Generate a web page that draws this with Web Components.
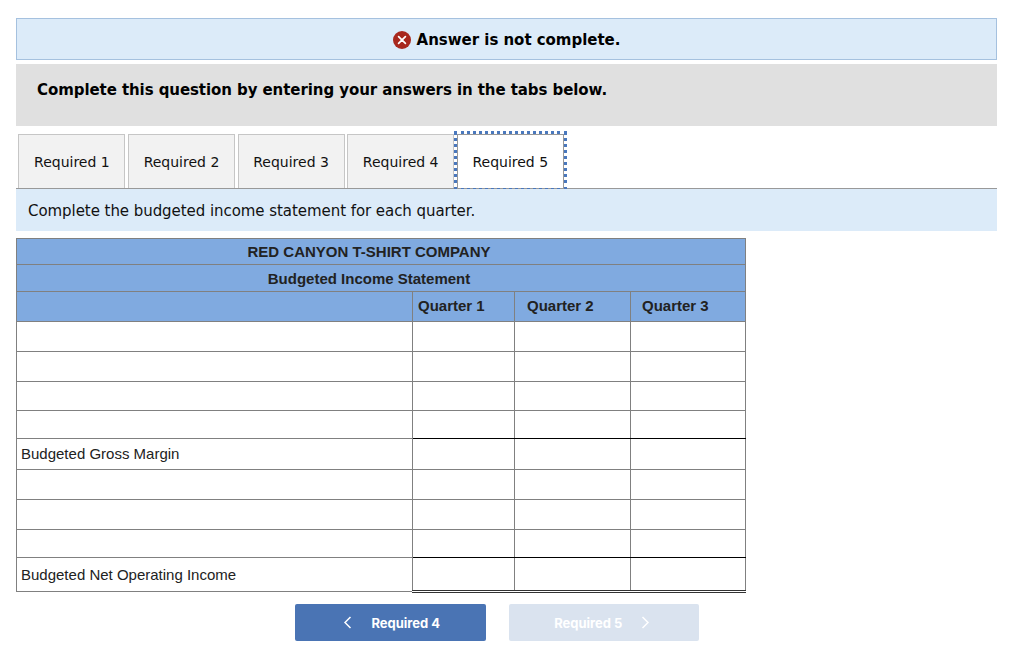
<!DOCTYPE html>
<html>
<head>
<meta charset="utf-8">
<title>Budgeted Income Statement</title>
<style>
    html, body { margin: 0; background: #fff; }
    body { padding: 18px 27px 0 16px; font-family: "DejaVu Sans", sans-serif; color: #000; }
</style>
</head>
<body>
<alert-banner>Answer is not complete.</alert-banner>
<question-prompt>Complete this question by entering your answers in the tabs below.</question-prompt>
<tab-strip>
    <tab-item>Required 1</tab-item>
    <tab-item>Required 2</tab-item>
    <tab-item>Required 3</tab-item>
    <tab-item>Required 4</tab-item>
    <tab-item active>Required 5</tab-item>
</tab-strip>
<instruction-bar>Complete the budgeted income statement for each quarter.</instruction-bar>
<statement-table></statement-table>
<nav-buttons>
    <nav-button dir="prev">Required 4</nav-button>
    <nav-button dir="next" disabled>Required 5</nav-button>
</nav-buttons>

<script>
class AlertBanner extends HTMLElement {
    connectedCallback() {
        this.attachShadow({ mode: 'open' });
        this.shadowRoot.innerHTML = `
            <style>
                :host {
                    display: flex;
                    align-items: center;
                    justify-content: center;
                    gap: 6px;
                    box-sizing: border-box;
                    height: 42px;
                    padding-top: 2px;
                    background: #dcebf9;
                    border: 1px solid #a5c1df;
                    font-size: 15px;
                    letter-spacing: -0.03px;
                    font-weight: bold;
                    color: #000;
                }
                svg { display: block; }
            </style>
            <svg width="18" height="18" viewBox="0 0 18 18">
                <circle cx="9" cy="9" r="9" fill="#a8281e"/>
                <path d="M5.6 5.6 12.4 12.4M12.4 5.6 5.6 12.4" stroke="#fff" stroke-width="1.7" stroke-linecap="round"/>
            </svg>
            <span><slot></slot></span>
        `;
    }
}
customElements.define('alert-banner', AlertBanner);

class QuestionPrompt extends HTMLElement {
    connectedCallback() {
        this.attachShadow({ mode: 'open' });
        this.shadowRoot.innerHTML = `
            <style>
                :host {
                    display: block;
                    box-sizing: border-box;
                    height: 62px;
                    margin-top: 4px;
                    padding: 17px 21px 0;
                    background: #e0e0e0;
                    font-size: 15px;
                    letter-spacing: -0.075px;
                    line-height: 18px;
                    font-weight: bold;
                }
            </style>
            <slot></slot>
        `;
    }
}
customElements.define('question-prompt', QuestionPrompt);

class TabStrip extends HTMLElement {
    connectedCallback() {
        this.attachShadow({ mode: 'open' });
        this.shadowRoot.innerHTML = `
            <style>
                :host {
                    display: flex;
                    gap: 2.6px;
                    box-sizing: border-box;
                    height: 63px;
                    padding: 8px 0 0 2.4px;
                    border-bottom: 1px solid #999;
                }
            </style>
            <slot></slot>
        `;
    }
}
customElements.define('tab-strip', TabStrip);

class TabItem extends HTMLElement {
    connectedCallback() {
        this.attachShadow({ mode: 'open' });
        this.shadowRoot.innerHTML = `
            <style>
                :host {
                    display: flex;
                    align-items: center;
                    justify-content: center;
                    box-sizing: border-box;
                    width: 107px;
                    height: 54px;
                    background: #f2f2f2;
                    border: 1px solid #c6c6c6;
                    border-bottom: 0;
                    font-size: 14px;
                    color: #111;
                }
                :host([active]) {
                    background: #fff;
                    border-color: #999;
                    outline: 3px dotted #4a78bd;
                }
            </style>
            <slot></slot>
        `;
    }
}
customElements.define('tab-item', TabItem);

class InstructionBar extends HTMLElement {
    connectedCallback() {
        this.attachShadow({ mode: 'open' });
        this.shadowRoot.innerHTML = `
            <style>
                :host {
                    display: flex;
                    align-items: center;
                    position: relative;
                    box-sizing: border-box;
                    height: 42px;
                    padding: 2px 0 0 12px;
                    background: #dcebf9;
                    font-size: 15px;
                    letter-spacing: -0.055px;
                    color: #111;
                }
            </style>
            <slot></slot>
        `;
    }
}
customElements.define('instruction-bar', InstructionBar);

const ROW_LABELS = { 4: 'Budgeted Gross Margin', 8: 'Budgeted Net Operating Income' };
const ROW_HEIGHTS = [30, 30, 29, 28, 31, 30, 30, 28, 34];

class StatementTable extends HTMLElement {
    connectedCallback() {
        this.attachShadow({ mode: 'open' });
        const rows = ROW_HEIGHTS.map((h, i) => {
            const cls = i === 3 || i === 7 ? 'subtotal' : i === 8 ? 'total' : '';
            return `<tr class="${cls}" style="height:${h}px">
                <td class="label">${ROW_LABELS[i] || ''}</td>
                <td></td><td></td><td></td>
            </tr>`;
        });
        this.shadowRoot.innerHTML = `
            <style>
                :host {
                    display: block;
                    width: 729px;
                    margin-top: 7px;
                    font-family: "Liberation Sans", Arial, sans-serif;
                    font-size: 15px;
                    color: #222;
                }
                table {
                    border-collapse: collapse;
                    table-layout: fixed;
                    width: 729px;
                }
                td, th {
                    box-sizing: border-box;
                    padding: 0 4px;
                    border: 1px solid #808080;
                }
                td.label { padding-bottom: 2px; }
                tr.total td.label { padding-bottom: 0; }
                th {
                    background: #80aae0;
                    font-weight: bold;
                    text-align: center;
                    padding-bottom: 2px;
                }
                th.title { padding-bottom: 0; }
                th.title span { display: block; width: 696px; }
                th.col { text-align: left; padding-left: 5px; }
                th.wide { padding-left: 12px; }
                th.last { padding-left: 11px; }
                tr.subtotal td:not(.label) { border-bottom-color: #000; }
                tr.total td:not(.label) { border-bottom: 3px double #333; }
            </style>
            <table>
                <colgroup>
                    <col style="width:396px"><col style="width:102px"><col style="width:116px"><col style="width:115px">
                </colgroup>
                <tr style="height:26px"><th class="title" colspan="4"><span>RED CANYON T-SHIRT COMPANY</span></th></tr>
                <tr style="height:27px"><th class="title" colspan="4"><span>Budgeted Income Statement</span></th></tr>
                <tr style="height:30px">
                    <th></th>
                    <th class="col">Quarter 1</th>
                    <th class="col wide">Quarter 2</th>
                    <th class="col last">Quarter 3</th>
                </tr>
                ${rows.join('')}
            </table>
        `;
    }
}
customElements.define('statement-table', StatementTable);

class NavButtons extends HTMLElement {
    connectedCallback() {
        this.attachShadow({ mode: 'open' });
        this.shadowRoot.innerHTML = `
            <style>
                :host {
                    display: flex;
                    gap: 23px;
                    margin-top: 11px;
                    padding-left: 279px;
                }
            </style>
            <slot></slot>
        `;
    }
}
customElements.define('nav-buttons', NavButtons);

class NavButton extends HTMLElement {
    connectedCallback() {
        this.attachShadow({ mode: 'open' });
        const prev = this.getAttribute('dir') === 'prev';
        const chevron = `<svg width="9" height="13" viewBox="0 0 9 13"><path d="${prev ? 'M7.5 1 2 6.5 7.5 12' : 'M1.5 1 7 6.5 1.5 12'}" fill="none" stroke="#fff" stroke-width="1.5"/></svg>`;
        this.shadowRoot.innerHTML = `
            <style>
                :host {
                    display: flex;
                    align-items: center;
                    justify-content: center;
                    gap: 19px;
                    box-sizing: border-box;
                    width: 190.5px;
                    height: 37px;
                    padding-left: 3px;
                    border-radius: 2px;
                    background: #4a74b4;
                    font-family: Inter, Roboto, sans-serif;
                    font-size: 13px;
                    font-weight: 700;
                    color: #fff;
                }
                :host([disabled]) { background: #dae3ef; padding: 0 3px 0 0; }
                svg { display: block; }
            </style>
            ${prev ? chevron : ''}<span><slot></slot></span>${prev ? '' : chevron}
        `;
    }
}
customElements.define('nav-button', NavButton);
</script>
</body>
</html>
